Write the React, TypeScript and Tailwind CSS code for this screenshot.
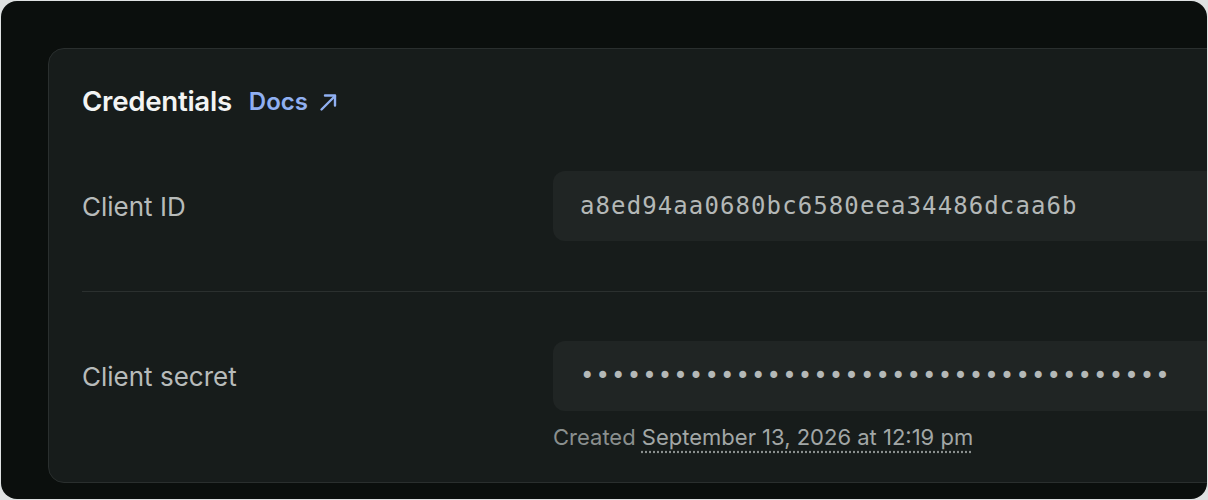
const sans = { fontFamily: "Inter, 'Noto Sans', sans-serif" };

const Field = ({ children }: { children: React.ReactNode }) => (
  <div
    className="flex h-[70px] items-center rounded-[12px] bg-[#202524] pl-[27px] text-[24px] tracking-[1.1px] text-[#b4b8b7]"
    style={{ fontFamily: "'DejaVu Sans Mono', 'Liberation Mono', monospace" }}
  >
    {children}
  </div>
);

const App = () => {
  return (
    <div className="h-[500px] w-[1208px] bg-[#dfe2e2] p-px" style={sans}>
      <div className="h-full overflow-hidden rounded-[16px] bg-[#0b0f0d] pl-[47px] pt-[47px]">
        <div className="w-[1300px] rounded-[16px] border border-[#2a2f2e] bg-[#171c1b] pb-[31px] pl-[33px] pt-[35px]">
          <div className="flex h-[36px] items-center gap-[17px]">
            <h2 className="text-[27.7px] font-semibold tracking-[-0.3px] text-[#f3f4f4]">Credentials</h2>
            <a href="#" className="flex items-center gap-[11px] text-[24px] font-semibold text-[#90b0f2]">
              Docs
              <svg width="19" height="19" viewBox="0 0 19 19" fill="none" stroke="currentColor" strokeWidth="2.4" strokeLinecap="round" strokeLinejoin="round">
                <path d="M2.5 16.5 16 3" />
                <path d="M6 2.5h10v10" />
              </svg>
            </a>
          </div>

          <div className="mt-[51px] grid grid-cols-[471px_1fr] items-center">
            <span className="text-[26px] text-[#b7bbba]">Client ID</span>
            <Field>a8ed94aa0680bc6580eea34486dcaa6b</Field>
          </div>

          <div className="mt-[50px] h-px bg-[#2b302f]" />

          <div className="mt-[49px] grid grid-cols-[471px_1fr]">
            <span className="flex h-[70px] items-center text-[26px] text-[#b7bbba]">Client secret</span>
            <div>
              <Field>{"•".repeat(38)}</Field>
              <p className="mt-[12px] text-[22px] leading-[28px] text-[#8a8f8e]">
                Created{" "}
                <span className="text-[#a2a7a6] underline decoration-dotted decoration-[#8a8f8e] underline-offset-[6px]">
                  September 13, 2026 at 12:19 pm
                </span>
              </p>
            </div>
          </div>
        </div>
      </div>
    </div>
  );
};

export default App;
